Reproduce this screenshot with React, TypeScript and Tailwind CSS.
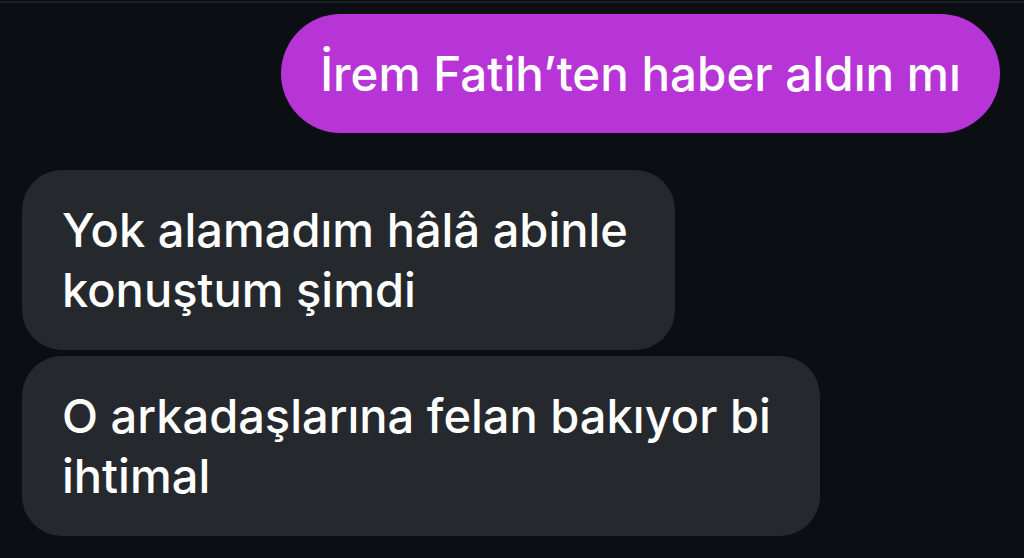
import React from 'react';

type Message = {
  id: number;
  text: string;
  mine: boolean;
  width?: string;
};

const messages: Message[] = [
  { id: 1, text: 'İrem Fatih’ten haber aldın mı', mine: true },
  { id: 2, text: 'Yok alamadım hâlâ abinle konuştum şimdi', mine: false, width: 'w-[653px]' },
  { id: 3, text: 'O arkadaşlarına felan bakıyor bi ihtimal', mine: false, width: 'w-[798px]' },
];

const App: React.FC = () => {
  return (
    <div
      className="w-full h-[558px] bg-[#0b0e13] overflow-hidden flex flex-col"
      style={{ fontFamily: 'Inter, "Noto Sans", sans-serif' }}
    >
      {/* thin divider under the header */}
      <div className="h-[3px] border-b-2 border-[#1c2128]" />

      {/* Outgoing */}
      <div className="flex justify-end pr-[24px] mt-[11px]">
        <div className="h-[119px] px-[39px] rounded-full bg-[#b734d6] flex items-center">
          <span className="text-white text-[47.5px] font-medium leading-[60px] whitespace-nowrap">
            {messages[0].text}
          </span>
        </div>
      </div>

      {/* Incoming */}
      <div className="flex flex-col gap-[6px] pl-[22px] mt-[37px]">
        {messages
          .filter((m) => !m.mine)
          .map((m) => (
            <div
              key={m.id}
              className={`${m.width} bg-[#25282d] rounded-[40px] px-[40px] py-[30px] text-white text-[47px] font-medium leading-[60px]`}
            >
              {m.text}
            </div>
          ))}
      </div>
    </div>
  );
};

export default App;
